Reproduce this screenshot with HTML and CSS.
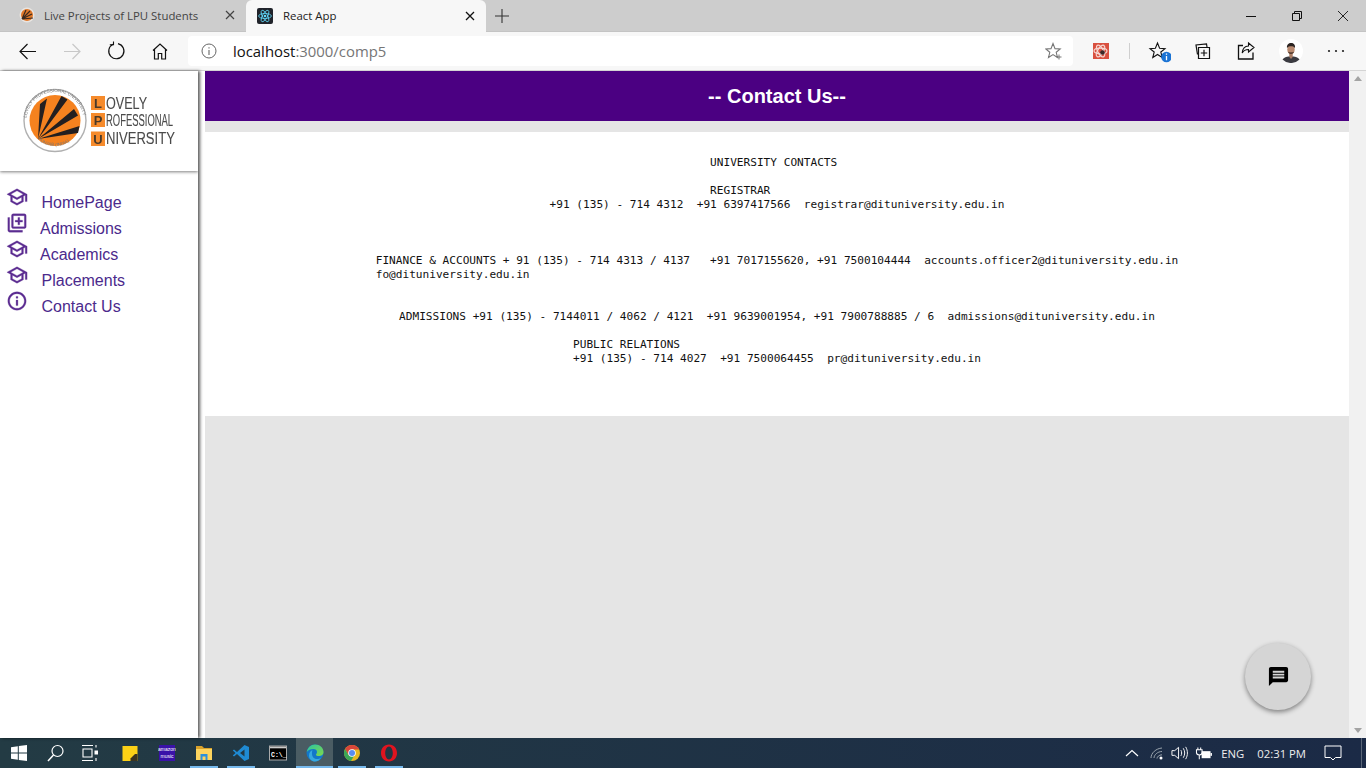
FILE: index.html
```html
<!DOCTYPE html>
<html lang="en">
<head>
<meta charset="utf-8">
<title>React App</title>
<link rel="stylesheet" href="styles.css">
</head>
<body>
<div class="tabbar">
  <div class="tab tab-inactive">
    <svg class="favicon" viewBox="0 0 16 16"><circle cx="8" cy="8" r="7.5" fill="#e8e4e0"/><circle cx="8" cy="8" r="6" fill="#e0782a"/><path d="M3 12 7 3M3 12 11 4M3 12 13 7M3 12 14 11" stroke="#3a2a20" stroke-width="1.2"/></svg>
    <span class="tab-title">Live Projects of LPU Students</span>
    <svg class="tab-close" viewBox="0 0 10 10"><path d="M1 1 9 9M9 1 1 9" stroke="#444" stroke-width="1.2"/></svg>
  </div>
  <div class="tab tab-active">
    <svg class="favicon" viewBox="0 0 16 16"><rect width="16" height="16" rx="2" fill="#20232a"/><g fill="none" stroke="#61dafb" stroke-width=".8"><ellipse cx="8" cy="8" rx="6.4" ry="2.5"/><ellipse cx="8" cy="8" rx="6.4" ry="2.5" transform="rotate(60 8 8)"/><ellipse cx="8" cy="8" rx="6.4" ry="2.5" transform="rotate(120 8 8)"/></g><circle cx="8" cy="8" r="1.3" fill="#61dafb"/></svg>
    <span class="tab-title tab-title-active">React App</span>
    <svg class="tab-close" viewBox="0 0 10 10"><path d="M1 1 9 9M9 1 1 9" stroke="#111" stroke-width="1.3"/></svg>
  </div>
  <svg class="new-tab" viewBox="0 0 14 14"><path d="M7 0V14M0 7H14" stroke="#333" stroke-width="1.1"/></svg>
  <div class="window-controls">
    <span class="win-btn"><svg class="win-icon" viewBox="0 0 10 10"><path d="M0 5.5H10" stroke="#111"/></svg></span>
    <span class="win-btn"><svg class="win-icon" viewBox="0 0 10 10"><path d="M.5 2.5H7.5V9.5H.5ZM2.5 2.5V.5H9.5V7.5H7.5" fill="none" stroke="#111"/></svg></span>
    <span class="win-btn"><svg class="win-icon" viewBox="0 0 10 10"><path d="M0 0 10 10M10 0 0 10" stroke="#111" stroke-width=".9"/></svg></span>
  </div>
</div>

<div class="toolbar">
  <span class="tool"><svg class="tool-icon" viewBox="0 0 20 20"><path d="M18 10.5H2M9.5 3 2 10.5 9.5 18" fill="none" stroke="#111" stroke-width="1.2"/></svg></span>
  <span class="tool"><svg class="tool-icon" viewBox="0 0 20 20"><path d="M2 10.5H18M10.5 3 18 10.5 10.5 18" fill="none" stroke="#c8c8c8" stroke-width="1.2"/></svg></span>
  <span class="tool"><svg class="tool-icon" viewBox="0 0 20 20"><path d="M7 3.300A7.600 7.600 0 1 0 12 2.700" fill="none" stroke="#111" stroke-width="1.200"/><path d="M7.500 .5V3.800H3.800" fill="none" stroke="#111" stroke-width="1.100"/></svg></span>
  <span class="tool"><svg class="tool-icon" viewBox="0 0 20 20"><path d="M3 9.5 10 3l7 6.500M4.500 8.500V18H8.300V12.500H11.700V18H15.500V8.500" fill="none" stroke="#111" stroke-width="1.200"/></svg></span>
  <div class="address">
    <svg class="addr-info" viewBox="0 0 16 16"><circle cx="8" cy="8" r="7" fill="none" stroke="#666" stroke-width="1"/><path d="M8 7V12M8 4.200V5.600" stroke="#666" stroke-width="1.100"/></svg>
    <span class="url">localhost<span class="url-muted">:3000/comp5</span></span>
    <svg class="addr-star" viewBox="0 0 18 18"><path d="M8 1.500 10 6.600l5.200.3-4 3.400 1.300 5.200L8 12.600 3.500 15.500l1.300-5.200-4-3.400L6 6.600Z" fill="none" stroke="#777" stroke-width="1.100"/><path d="M14 12.500V17.500M11.500 15H16.500" stroke="#777" stroke-width="1"/></svg>
  </div>
  <span class="tool tool-ext"><svg class="tool-icon-ext" viewBox="0 0 16 16"><rect width="16" height="16" fill="#d9503f"/><g fill="none" stroke="#f7d6d0" stroke-width="1.200"><ellipse cx="7.500" cy="8" rx="6.500" ry="2.800" transform="rotate(60 7.500 8)"/><ellipse cx="7.500" cy="8" rx="6.500" ry="2.800" transform="rotate(120 7.500 8)"/><ellipse cx="7.500" cy="8" rx="6.500" ry="2.800"/></g><circle cx="9.500" cy="9.500" r="2.300" fill="#3a2a2a"/></svg></span>
  <span class="tool-sep"></span>
  <span class="tool"><svg class="tool-icon-lg" viewBox="0 0 24 24"><path d="M10.500 4 12.600 9.200 18 9.600 13.800 13 15.200 18.500 10.500 15.500 5.800 18.500 7.200 13 3 9.600 8.400 9.200Z" fill="none" stroke="#111" stroke-width="1.100"/><circle cx="19.500" cy="18" r="5.300" fill="#1a73d4"/><path d="M19.500 17V21.300M19.500 14.500V15.800" stroke="#fff" stroke-width="1.300"/></svg></span>
  <span class="tool"><svg class="tool-icon" viewBox="0 0 20 20"><path d="M4.500 13.500 3 4 13.500 2.800 14 6" fill="none" stroke="#111" stroke-width="1.200"/><path d="M5.500 6.500H16.500V17.500H5.500ZM11 8.800V15.200M7.800 12H14.200" fill="none" stroke="#111" stroke-width="1.200"/></svg></span>
  <span class="tool"><svg class="tool-icon" viewBox="0 0 20 20"><path d="M6 4.500H1.500V18H16V11.500" fill="none" stroke="#111" stroke-width="1.300"/><path d="M11.500 2 17 6.500 11.500 11V8.500C8.500 8.500 6.500 9.500 5.200 12 5.500 8.500 7.500 5.200 11.500 5Z" fill="none" stroke="#111" stroke-width="1.100"/></svg></span>
  <span class="tool"><svg class="avatar" viewBox="0 0 24 24"><circle cx="12" cy="12" r="12" fill="#fff"/><path d="M3.500 20.500C5 18 8.500 17.500 12 17.500s7 .5 8.500 3A12 12 0 0 1 3.500 20.500Z" fill="#3a3a40"/><path d="M10.300 14h3.400v4l-1.700 2-1.700-2Z" fill="#a97c64"/><ellipse cx="12" cy="10.500" rx="3.700" ry="5" fill="#b98a70"/><path d="M8 9C7.500 5.500 10 3.800 12.300 4 14.500 4.100 16.500 5.500 16 9 15.200 7.500 13.500 7.200 12 7.200S8.800 7.500 8 9Z" fill="#2a2320"/><path d="M9 12.800C10 15.800 14 15.800 15 12.800 13.700 13.600 10.300 13.600 9 12.800Z" fill="#4a362c"/></svg></span>
  <span class="tool"><svg class="tool-icon" viewBox="0 0 20 20"><circle cx="4" cy="10" r="1.100" fill="#222"/><circle cx="11" cy="10" r="1.100" fill="#222"/><circle cx="18" cy="10" r="1.100" fill="#222"/></svg></span>
</div>

<div class="viewport">
  <aside class="sidebar">
    <div class="logo-box">
      <svg class="logo" viewBox="0 0 160 72">
        <defs>
          <path id="ring-top" d="M6.500 36.500A28.500 28.500 0 0 1 63.500 36.500"/>
          <path id="ring-bottom" d="M13 50A26 26 0 0 0 57 50"/>
        </defs>
        <circle cx="35" cy="36.500" r="31" fill="#fff" stroke="#b0b0b0" stroke-width="1.400"/>
        <circle cx="35" cy="36.500" r="25.500" fill="#f5821f"/>
        <path d="M18 55 20 20 27 14.500ZM18 55 41.500 12 47.500 15.500ZM18 55 54 25 58 31.500ZM18 55 59.500 42 58 49Z" fill="#231f20"/>
        <text class="ring-text"><textPath href="#ring-top" startOffset="3%">LOVELY  PROFESSIONAL  UNIVERSITY</textPath></text>
        <text class="ring-text"><textPath href="#ring-bottom" startOffset="14%">PUNJAB (INDIA)</textPath></text>
        <rect class="logo-square" x="71" y="12" width="14" height="14"/>
        <rect class="logo-square" x="71" y="29" width="14" height="14"/>
        <rect class="logo-square" x="71" y="47.500" width="14" height="14.500"/>
        <text class="logo-initial" x="78" y="24">L</text>
        <text class="logo-initial" x="78" y="41">P</text>
        <text class="logo-initial" x="78" y="60">U</text>
        <text class="logo-word" transform="translate(86 24.500) scale(.84 1.050)">OVELY</text>
        <text class="logo-word" transform="translate(86 42) scale(.63 1.050)">ROFESSIONAL</text>
        <text class="logo-word" transform="translate(86 60) scale(.87 1.050)">NIVERSITY</text>
      </svg>
    </div>
    <nav class="nav">
      <a class="nav-item"><svg class="nav-icon" viewBox="0 0 24 24"><path d="M12 3L1 9l4 2.180v6L12 21l7-3.820v-6l2-1.090V17h2V9L12 3zm6.820 6L12 12.720 5.180 9 12 5.280 18.820 9zM17 15.990l-5 2.730-5-2.730v-3.720L12 15l5-2.730v3.720z"/></svg><span class="nav-label">HomePage</span></a>
      <a class="nav-item"><svg class="nav-icon" viewBox="0 0 24 24"><path d="M4 6H2v14c0 1.100.9 2 2 2h14v-2H4V6zm16-4H8c-1.100 0-2 .9-2 2v12c0 1.100.9 2 2 2h12c1.100 0 2-.9 2-2V4c0-1.100-.9-2-2-2zm0 14H8V4h12v12zm-7-2h2v-3h3V9h-3V6h-2v3h-3v2h3z"/></svg><span class="nav-label nav-label-tight">Admissions</span></a>
      <a class="nav-item"><svg class="nav-icon" viewBox="0 0 24 24"><path d="M12 3L1 9l4 2.180v6L12 21l7-3.820v-6l2-1.090V17h2V9L12 3zm6.820 6L12 12.720 5.180 9 12 5.280 18.820 9zM17 15.990l-5 2.730-5-2.730v-3.720L12 15l5-2.730v3.720z"/></svg><span class="nav-label nav-label-tight">Academics</span></a>
      <a class="nav-item"><svg class="nav-icon" viewBox="0 0 24 24"><path d="M12 3L1 9l4 2.180v6L12 21l7-3.820v-6l2-1.090V17h2V9L12 3zm6.820 6L12 12.720 5.180 9 12 5.280 18.820 9zM17 15.990l-5 2.730-5-2.730v-3.720L12 15l5-2.730v3.720z"/></svg><span class="nav-label">Placements</span></a>
      <a class="nav-item"><svg class="nav-icon" viewBox="0 0 24 24"><path d="M11 7h2v2h-2zm0 4h2v6h-2zm1-9C6.480 2 2 6.480 2 12s4.480 10 10 10 10-4.480 10-10S17.520 2 12 2zm0 18c-4.410 0-8-3.590-8-8s3.590-8 8-8 8 3.590 8 8-3.590 8-8 8z"/></svg><span class="nav-label">Contact Us</span></a>
    </nav>
  </aside>

  <main class="content">
    <h1 class="page-title">-- Contact Us--</h1>
    <section class="contact-card">
<pre class="contact-block">                        UNIVERSITY CONTACTS

                        REGISTRAR
+91 (135) - 714 4312  +91 6397417566  registrar@dituniversity.edu.in</pre>
<pre class="contact-block gap-lg">FINANCE &amp; ACCOUNTS + 91 (135) - 714 4313 / 4137   +91 7017155620, +91 7500104444  accounts.officer2@dituniversity.edu.in
fo@dituniversity.edu.in</pre>
<pre class="contact-block gap-md">ADMISSIONS +91 (135) - 7144011 / 4062 / 4121  +91 9639001954, +91 7900788885 / 6  admissions@dituniversity.edu.in</pre>
<pre class="contact-block gap-sm">PUBLIC RELATIONS
+91 (135) - 714 4027  +91 7500064455  pr@dituniversity.edu.in</pre>
    </section>
  </main>

  <div class="scrollbar">
    <span class="arrow-up"></span>
    <span class="arrow-down"></span>
  </div>
</div>

<button class="fab" type="button" aria-label="Chat">
  <svg class="fab-icon" viewBox="0 0 24 24"><path d="M20 2H4c-1.100 0-1.990.9-1.990 2L2 22l4-4h14c1.100 0 2-.9 2-2V4c0-1.100-.9-2-2-2zm-2 12H6v-2h12v2zm0-3H6V9h12v2zm0-3H6V6h12v2z"/></svg>
</button>

<footer class="taskbar">
  <div class="task-apps">
    <span class="task"><svg class="task-icon" viewBox="0 0 18 18"><path d="M1 3.200 7.800 2.200V8.500H1ZM8.800 2 17 1V8.500H8.800ZM1 9.500H7.800V15.800L1 14.800ZM8.800 9.500H17V17L8.800 16Z" fill="#fff"/></svg></span>
    <span class="task"><svg class="task-icon" viewBox="0 0 18 18"><circle cx="10.500" cy="7" r="5.500" fill="none" stroke="#fff" stroke-width="1.200"/><path d="M6.500 11 1 17" stroke="#fff" stroke-width="1.500"/></svg></span>
    <span class="task"><svg class="task-icon task-view" viewBox="0 0 18 18"><path d="M1 1.500H12M1 16.500H12M2 5H11V13H2ZM15 1V3.500M15 14V17" fill="none" stroke="#fff" stroke-width="1.100"/><rect x="13.500" y="6.500" width="3.500" height="4" fill="#fff"/></svg></span>
    <span class="task"><svg class="task-icon" viewBox="0 0 18 18"><rect x="1.500" y="2" width="15" height="15" fill="#fcd116"/><path d="M16.500 10V17H9.500V14.500L14 10Z" fill="#3a3320"/></svg></span>
    <span class="task"><svg class="task-icon" viewBox="0 0 18 18"><rect x="1" y="1" width="16" height="16" fill="#3a12a8"/><text class="amazon-top" x="9" y="7">amazon</text><text class="amazon-bottom" x="9" y="13.500">music</text></svg></span>
    <span class="task task-open task-open-split"><svg class="task-icon" viewBox="0 0 18 18"><path d="M1 2H7L9 4H17V6H1Z" fill="#d9a22b"/><path d="M1 5H17V16H1Z" fill="#fcd45e"/><path d="M5.500 10H12.500V16H10.500V12.500H7.500V16H5.500Z" fill="#2b90d9"/></svg></span>
    <span class="task task-open"><svg class="task-icon" viewBox="0 0 18 18"><path d="M12.500 1 17 3V15L12.500 17 5 10 2 12.500 .8 11.500 3.500 9 .8 6.500 2 5.500 5 8ZM12.500 5.500 8 9 12.500 12.500Z" fill="#1f8ad2"/></svg></span>
    <span class="task"><svg class="task-icon" viewBox="0 0 18 18"><rect x=".5" y="2" width="17" height="14" fill="#000" stroke="#aaa"/><rect x="1" y="2.500" width="16" height="1.800" fill="#ccc"/><text class="cmd-text" x="2" y="12.500">C:\_</text></svg></span>
    <span class="task task-open task-current"><svg class="task-icon task-icon-lg" viewBox="0 0 18 18"><defs><linearGradient id="edge-a" x1="0" y1="0" x2="1" y2="1"><stop offset="0" stop-color="#2bc4a0"/><stop offset="1" stop-color="#7fd84c"/></linearGradient></defs><circle cx="9" cy="9" r="8.500" fill="#1277c9"/><path d="M.8 8C1.500 3.500 5 .5 9 .5c5 0 8.500 3.500 8.500 7.500 0 3-2.500 4-4.500 4s-3-.5-3-1.500c0-.5 1-1 1-2.500C11 6 9.500 5 7.500 5 4.500 5 2 6 .8 8Z" fill="url(#edge-a)"/><path d="M6 10c0 3 2.500 5 5 5 1.500 0 3-.5 4-1.500-1 2.500-3.500 4-6 4-2.500 0-6-2-6-6 0-3 2-5 3.500-5.500C6 7 6 8.500 6 10Z" fill="#36a8e0"/></svg></span>
    <span class="task task-open"><svg class="task-icon" viewBox="0 0 18 18"><circle cx="9" cy="9" r="8" fill="#e8b820"/><path d="M9 1A8 8 0 0 0 2.100 5L5.500 11 9 5.500H16.300A8 8 0 0 0 9 1Z" fill="#d8453a"/><path d="M2.100 5A8 8 0 0 0 8 17L11.500 11 5.500 11Z" fill="#3aa757"/><circle cx="9" cy="9" r="3.800" fill="#fff"/><circle cx="9" cy="9" r="3" fill="#5a8cf0"/></svg></span>
    <span class="task task-open"><svg class="task-icon" viewBox="0 0 18 18"><path d="M9 .5C4 .5 1 4.500 1 9s3 8.500 8 8.500 8-4 8-8.500S14 .5 9 .5Zm0 2C11.200 2.500 12.800 5.500 12.800 9S11.200 15.500 9 15.500 5.200 12.500 5.200 9 6.800 2.500 9 2.500Z" fill="#e0141f"/></svg></span>
  </div>
  <div class="tray">
    <svg class="tray-icon tray-caret" viewBox="0 0 14 14"><path d="M1 10 7 4.500 13 10" fill="none" stroke="#fff" stroke-width="1.200"/></svg>
    <svg class="tray-icon tray-wifi" viewBox="0 0 14 14"><path d="M1 12C1 7 6 2.500 12 2M4 12C4 9 7.500 5.500 12 5.500M7 12.500C7 11 9 8.800 12 8.800" fill="none" stroke="#9aa4ad" stroke-width="1"/><circle cx="11" cy="12" r="1.500" fill="#fff"/></svg>
    <svg class="tray-icon tray-vol" viewBox="0 0 18 16"><path d="M1 5.500H4L8 2V14L4 10.500H1Z" fill="none" stroke="#fff" stroke-width="1"/><path d="M10.500 5C11.500 6.500 11.500 9.500 10.500 11M13 3C15 6 15 10 13 13M15.500 1.500C18 5.500 18 10.500 15.500 14.500" fill="none" stroke="#fff" stroke-width="1"/></svg>
    <svg class="tray-icon tray-batt" viewBox="0 0 18 16"><path d="M3 1.500V4M6 1.500V4M1.500 4H7.500V7C7.500 9 6 9.500 4.500 9.500S1.500 9 1.500 7ZM4.500 9.500V14" fill="none" stroke="#fff" stroke-width="1.100"/><rect x="7" y="5.500" width="9.500" height="7.500" fill="#fff"/><rect x="16.500" y="7.500" width="1.500" height="3" fill="#fff"/></svg>
    <span class="tray-lang">ENG</span>
    <span class="tray-time">02:31 PM</span>
    <svg class="tray-icon tray-note" viewBox="0 0 18 16"><path d="M1 1H17V12.500H11.500L9 15 6.500 12.500H1Z" fill="none" stroke="#fff" stroke-width="1"/></svg>
    <span class="tray-edge"></span>
  </div>
</footer>
</body>
</html>
```

FILE: styles.css
```css
* { box-sizing: border-box; }
html, body { margin: 0; height: 100%; }
body {
  width: 1366px;
  height: 768px;
  overflow: hidden;
  display: flex;
  flex-direction: column;
  position: relative;
  font-family: "Liberation Sans", Arial, sans-serif;
  background: #fff;
}

/* browser tab strip */
.tabbar {
  height: 32px;
  flex: none;
  display: flex;
  align-items: stretch;
  background: #cdcdcd;
  border-bottom: 1px solid #c4c4c4;
}
.tab {
  display: flex;
  align-items: center;
  width: 240px;
  padding-bottom: 1px;
  font-family: "Open Sans", "Noto Sans", sans-serif;
  font-size: 11.4px;
}
.tab-inactive { width: 246px; padding-left: 19px; padding-right: 11px; }
.tab-active {
  height: 32px;
  padding-left: 11px;
  padding-right: 11px;
  background: #f7f7f7;
  border-radius: 6px 6px 0 0;
}
.favicon { width: 16px; height: 16px; flex: none; }
.tab-title {
  margin-left: 9px;
  flex: 1;
  color: #444;
  white-space: nowrap;
}
.tab-title-active { margin-left: 10px; color: #222; }
.tab-close { width: 10px; height: 10px; flex: none; }
.new-tab { width: 14px; height: 14px; margin: 9px 0 0 9px; }
.window-controls { margin-left: auto; display: flex; }
.win-btn {
  width: 46px;
  display: flex;
  align-items: center;
  justify-content: center;
}
.win-icon { width: 10px; height: 10px; }

/* browser toolbar */
.toolbar {
  height: 39px;
  flex: none;
  display: flex;
  align-items: center;
  padding-left: 6px;
  background: #f7f7f7;
  border-bottom: 1px solid #d4d4d4;
}
.tool {
  width: 44px;
  height: 30px;
  display: flex;
  align-items: center;
  justify-content: center;
  flex: none;
}
.tool-icon { width: 20px; height: 20px; }
.tool-icon-lg { width: 24px; height: 24px; }
.tool-icon-ext { width: 16px; height: 16px; }
.tool-ext { margin-left: 6px; }
.tool-sep {
  width: 1px;
  height: 16px;
  margin: 0 7px 0 6px;
  background: #cfcfcf;
  flex: none;
}
.avatar { width: 24px; height: 24px; }
.address {
  width: 885px;
  height: 30px;
  margin-left: 6px;
  padding: 0 12px;
  display: flex;
  align-items: center;
  background: #fff;
  border-radius: 4px;
  flex: none;
}
.addr-info { width: 16px; height: 16px; margin-left: 1px; }
.url {
  margin-left: 16px;
  font-family: "Open Sans", "Noto Sans", sans-serif;
  font-size: 14.9px;
  color: #111;
}
.url-muted { color: #767676; }
.addr-star { width: 18px; height: 18px; margin-left: auto; margin-right: -2px; }

/* page area */
.viewport {
  flex: 1;
  min-height: 0;
  display: flex;
  background: #fff;
}
.sidebar {
  width: 198px;
  flex: none;
  background: #fff;
  box-shadow: 2px 0 3px rgba(0, 0, 0, .65);
  z-index: 1;
  overflow: hidden;
}
.logo-box {
  height: 100px;
  padding: 13px 0 0 20px;
  box-shadow: 0 1px 3px rgba(0, 0, 0, .5);
}
.logo { display: block; width: 160px; height: 72px; filter: blur(.3px); overflow: hidden; }
.ring-text { font: 4.500px "Liberation Sans", sans-serif; fill: #777; }
.logo-square { fill: #f68b2c; }
.logo-initial {
  font: bold 13px "Liberation Sans", sans-serif;
  fill: #4a3a2a;
  text-anchor: middle;
}
.logo-word { font: 15px "Liberation Sans", sans-serif; fill: #4a4a4a; stroke: #4a4a4a; stroke-width: .1px; }
.nav { padding: 15px 0 0 6px; display: flex; flex-direction: column; }
.nav-item {
  height: 26px;
  display: flex;
  align-items: flex-start;
  color: #4b2a8c;
  font-size: 16px;
  line-height: 18px;
}
.nav-icon { width: 22px; height: 22px; flex: none; fill: #5b2c91; stroke: #5b2c91; stroke-width: .3px; }
.nav-label { margin: 8px 0 0 13.500px; }
.nav-label-tight { margin-left: 12px; }

.content {
  flex: 1;
  min-width: 0;
  margin-left: 7px;
  background: #e5e5e5;
}
.page-title {
  height: 50px;
  margin: 0 0 11px;
  display: flex;
  align-items: center;
  justify-content: center;
  background: #4b0082;
  color: #fff;
  font-size: 20px;
  font-weight: 700;
}
.contact-card {
  height: 284px;
  padding-top: 24px;
  display: flex;
  flex-direction: column;
  align-items: center;
  background: #fff;
}
.contact-block {
  margin: 0;
  font-family: "DejaVu Sans Mono", "Liberation Mono", monospace;
  font-size: 11.120px;
  line-height: 14px;
  color: #111;
}
.gap-lg { margin-top: 42px; }
.gap-md { margin-top: 28px; }
.gap-sm { margin-top: 14px; }

.scrollbar {
  width: 17px;
  flex: none;
  padding: 5px 0;
  display: flex;
  flex-direction: column;
  justify-content: space-between;
  align-items: center;
  background: #f1f1f1;
}
.arrow-up {
  border: 4px solid transparent;
  border-top: 0;
  border-bottom: 5px solid #a3a3a3;
}
.arrow-down {
  border: 4px solid transparent;
  border-bottom: 0;
  border-top: 5px solid #a3a3a3;
}

/* floating chat button */
.fab {
  position: absolute;
  left: 1245px;
  top: 643px;
  width: 66px;
  height: 67px;
  padding: 0;
  border: 0;
  border-radius: 50%;
  display: flex;
  align-items: center;
  justify-content: center;
  background: #d5d5d5;
  box-shadow: 0 2px 5px rgba(0, 0, 0, .45);
}
.fab-icon { width: 23px; height: 23px; fill: #000; }

/* Windows taskbar */
.taskbar {
  height: 30px;
  flex: none;
  display: flex;
  justify-content: space-between;
  background: linear-gradient(90deg, #233b44, #1b2a46);
}
.task-apps { display: flex; }
.task {
  width: 37px;
  display: flex;
  align-items: center;
  justify-content: center;
}
.task-icon { width: 18px; height: 18px; }
.task-icon-lg { width: 18px; height: 18px; }
.task-view { margin-left: -6px; }
.task-open {
  background: linear-gradient(#76b9ed, #76b9ed) center bottom / 28px 2px no-repeat;
}
.task-current {
  background:
    linear-gradient(#76b9ed, #76b9ed) center bottom / 100% 2px no-repeat,
    #4a5c63;
}
.amazon-top, .amazon-bottom {
  font: 5px "Liberation Sans", sans-serif;
  fill: #fff;
  text-anchor: middle;
}
.cmd-text { font: bold 6.500px "Liberation Mono", monospace; fill: #fff; }
.tray {
  display: flex;
  align-items: center;
  color: #eee;
  font-family: "Open Sans", "Noto Sans", sans-serif;
  font-size: 11.3px;
}
.tray-icon { flex: none; }
.tray-caret { width: 14px; height: 14px; }
.tray-wifi { width: 14px; height: 14px; margin-left: 11px; }
.tray-vol { width: 17px; height: 16px; margin-left: 7px; }
.tray-batt { width: 17px; height: 15px; margin-left: 7px; }
.tray-lang { margin-left: 9px; }
.tray-time { margin-left: 13px; }
.tray-note { width: 18px; height: 16px; margin-left: 18px; }
.tray-edge {
  width: 1px;
  height: 30px;
  margin-left: 19px;
  margin-right: 4px;
  background: #5a6678;
}
```
